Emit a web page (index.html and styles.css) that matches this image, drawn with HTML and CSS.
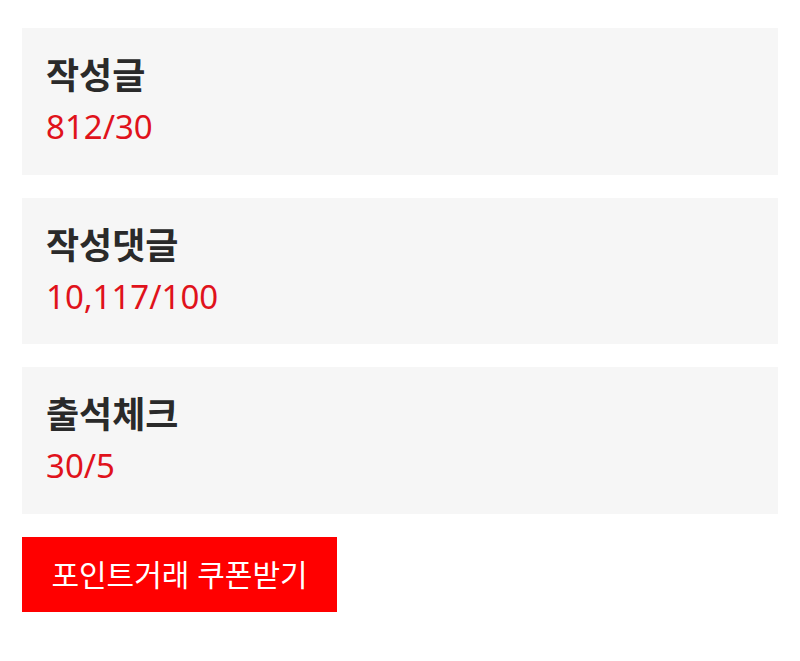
FILE: index.html
```html
<!DOCTYPE html>
<html lang="ko">
<head>
<meta charset="utf-8">
<link rel="stylesheet" href="styles.css">
</head>
<body>
<div class="page">
  <div class="card">
    <div class="title">작성글</div>
    <div class="value">812/30</div>
  </div>
  <div class="card">
    <div class="title">작성댓글</div>
    <div class="value">10,117/100</div>
  </div>
  <div class="card">
    <div class="title">출석체크</div>
    <div class="value">30/5</div>
  </div>
  <button class="btn">포인트거래 쿠폰받기</button>
</div>
</body>
</html>
```
FILE: styles.css
```css
html, body {
  margin: 0;
  padding: 0;
  background: #fff;
}
body {
  font-family: "Noto Sans", "Noto Sans CJK KR", sans-serif;
}
.page {
  padding: 28px 22px 0 22px;
  display: flex;
  flex-direction: column;
  align-items: flex-start;
  gap: 23px;
}
.card {
  align-self: stretch;
  background: #f6f6f6;
  padding: 23px 24px 0 24px;
  height: 146.5px;
  box-sizing: border-box;
}
.title {
  font-size: 36px;
  font-weight: 700;
  line-height: 50px;
  color: #2a2a2a;
}
.value {
  margin-top: 3px;
  font-size: 33px;
  line-height: 46px;
  color: #e0121b;
}
.btn {
  background: #ff0000;
  color: #fff;
  border: none;
  font-family: inherit;
  font-size: 30px;
  height: 75px;
  width: 315px;
  padding: 0 0 3px 0;
  margin: 0;
}
```
